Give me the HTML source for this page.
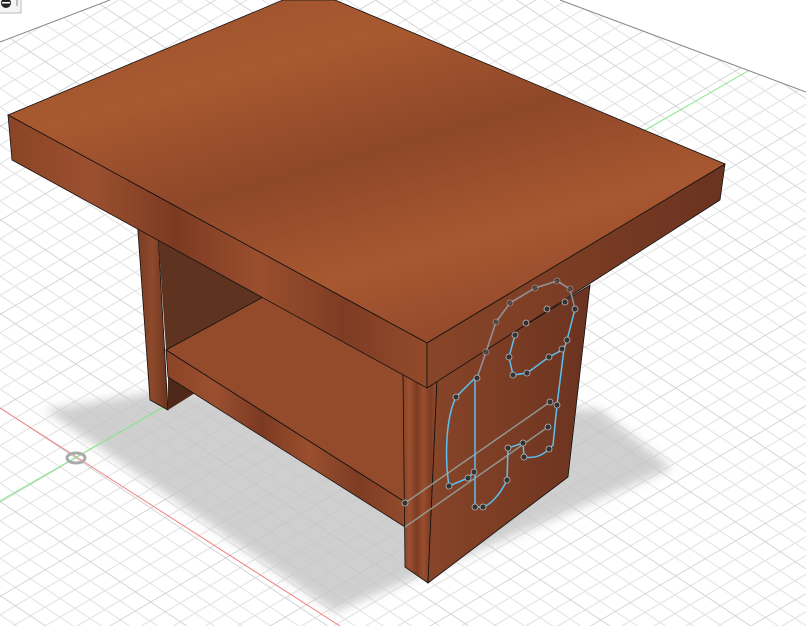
<!DOCTYPE html>
<html><head><style>
html,body{margin:0;padding:0;background:#fff;overflow:hidden}
svg{display:block}
</style></head><body>
<svg width="806" height="626" viewBox="0 0 806 626" xmlns="http://www.w3.org/2000/svg">
<defs>
<pattern id="g" width="10" height="10" patternUnits="userSpaceOnUse" patternTransform="matrix(7.5,5,7.5,-4.4,75,458)">
<path d="M0 0H10M0 2H10M0 4H10M0 6H10M0 8H10M0 0V10M2 0V10M4 0V10M6 0V10M8 0V10" stroke="#e2e2e2" stroke-width="0.13" fill="none"/>
<path d="M0 0H10M0 0V10" stroke="#c4c4c4" stroke-width="0.16" fill="none"/>
</pattern>
<filter id="bl"><feGaussianBlur stdDeviation="5"/></filter>
<linearGradient id="top" x1="0" y1="0" x2="0.6" y2="1">
<stop offset="0" stop-color="#9a502e"/><stop offset="0.3" stop-color="#a8592f"/><stop offset="0.55" stop-color="#8e4729"/><stop offset="0.8" stop-color="#a85830"/><stop offset="1" stop-color="#93492b"/>
</linearGradient>
<linearGradient id="wv" x1="0" y1="0" x2="1" y2="0">
<stop offset="0" stop-color="#8a4426"/><stop offset="0.2" stop-color="#9b5030"/><stop offset="0.4" stop-color="#7c3a22"/><stop offset="0.6" stop-color="#9a4f2e"/><stop offset="0.8" stop-color="#7e3c24"/><stop offset="1" stop-color="#934a2b"/>
</linearGradient>
<linearGradient id="rf" x1="0" y1="0" x2="1" y2="0">
<stop offset="0" stop-color="#874529"/><stop offset="0.5" stop-color="#7a3c24"/><stop offset="1" stop-color="#6a3320"/>
</linearGradient>
<linearGradient id="lg" x1="0" y1="0" x2="1" y2="0">
<stop offset="0" stop-color="#7a3c25"/><stop offset="0.5" stop-color="#8e4a2c"/><stop offset="1" stop-color="#6a321e"/>
</linearGradient>
</defs>
<polygon points="0,42 110,0 560,0 806,92 806,626 0,626" fill="url(#g)"/>
<line x1="0" y1="42" x2="110" y2="0" stroke="#888" stroke-width="1"/>
<line x1="560" y1="0" x2="806" y2="92" stroke="#888" stroke-width="1"/>
<polygon points="45,410 165,390 600,410 672,468 335,612" fill="#c4c4c4" opacity="0.8" filter="url(#bl)"/>
<line x1="0" y1="408" x2="340" y2="626" stroke="#f08080" stroke-width="1"/>
<line x1="0" y1="501" x2="748" y2="71" stroke="#80e880" stroke-width="1"/>
<ellipse cx="76" cy="458" rx="9" ry="5" fill="none" stroke="#aaa" stroke-width="3"/>
<polygon points="137,218 158,233 168,410 150,400" fill="url(#lg)" stroke="#111" stroke-width="0.8"/>
<polygon points="158,233 265,296 166,350" fill="#5e3420"/>
<polygon points="168,377 195,393 168,410" fill="#4e2818"/>
<polygon points="166,350 265,296 430,388 405,502" fill="#934b2c" stroke="#111" stroke-width="0.8"/>
<polygon points="166,350 405,502 405,527 168,377" fill="url(#wv)" stroke="#111" stroke-width="0.8"/>
<polygon points="403,374 437,380 428,583 405,567" fill="url(#wv)" stroke="#111" stroke-width="0.8"/>
<polygon points="437,380 590,285 568,477 428,583" fill="url(#rf)" stroke="#111" stroke-width="0.8"/>
<polygon points="8,115 283,0 335,0 725,164 427,343" fill="url(#top)" stroke="#111" stroke-width="0.8"/>
<polygon points="8,115 427,343 427,388 12,160" fill="url(#wv)" stroke="#111" stroke-width="0.8"/>
<polygon points="427,343 725,164 720,200 427,388" fill="url(#rf)" stroke="#111" stroke-width="0.8"/>
<g fill="none" stroke-width="1.5">
<path d="M405,503 L550,402 M405,527 L548,427" stroke="#9aa" opacity="0.8"/>
<path d="M477,378 L486,352 L496,322 L510,303 L535,288 L557,281 L570,289 L575,309" stroke="#9ab" opacity="0.8"/>
<path d="M575,309 L567,340 L564,349 L557,405 L553,445 L549,449 C540,458 530,458 524,457 L523,443 L508,448 L507,480 C500,495 490,505 483,507 L475,507 L475,378 L456,397 C445,420 445,460 449,486 L468,478 L474,472" stroke="#5bc0f0"/>
<path d="M564,349 L549,357 L527,373 L513,375 L509,357 L515,335" stroke="#5bc0f0"/>
</g>
<g fill="#333" stroke="#bbb" stroke-width="0.8">
<circle cx="405" cy="503" r="3"/><circle cx="477" cy="378" r="3"/><circle cx="456" cy="397" r="3"/><circle cx="449" cy="486" r="3"/><circle cx="468" cy="478" r="3"/><circle cx="474" cy="472" r="3"/><circle cx="475" cy="507" r="3"/><circle cx="483" cy="507" r="3"/><circle cx="507" cy="480" r="3"/><circle cx="508" cy="448" r="3"/><circle cx="523" cy="443" r="3"/><circle cx="524" cy="457" r="3"/><circle cx="549" cy="449" r="3"/><circle cx="557" cy="405" r="3"/><circle cx="562" cy="349" r="3"/><circle cx="567" cy="340" r="3"/><circle cx="575" cy="309" r="3"/><circle cx="565" cy="302" r="3"/><circle cx="547" cy="309" r="3"/><circle cx="526" cy="323" r="3"/><circle cx="515" cy="335" r="3"/><circle cx="509" cy="357" r="3"/><circle cx="513" cy="375" r="3"/><circle cx="527" cy="373" r="3"/><circle cx="549" cy="357" r="3"/><circle cx="550" cy="402" r="3"/><circle cx="548" cy="427" r="3"/>
<circle cx="486" cy="352" r="3" opacity="0.6"/><circle cx="496" cy="322" r="3" opacity="0.6"/><circle cx="510" cy="303" r="3" opacity="0.6"/><circle cx="535" cy="288" r="3" opacity="0.6"/><circle cx="557" cy="281" r="3" opacity="0.6"/><circle cx="570" cy="289" r="3" opacity="0.6"/>
</g>
<rect x="-1" y="-1" width="22" height="14" fill="#f4f4f4" stroke="#bbb"/>
<circle cx="6" cy="3" r="5" fill="#222"/><rect x="2" y="2" width="8" height="1.5" fill="#fff"/>
<line x1="17" y1="0" x2="17" y2="6" stroke="#888"/>
</svg>
</body></html>
